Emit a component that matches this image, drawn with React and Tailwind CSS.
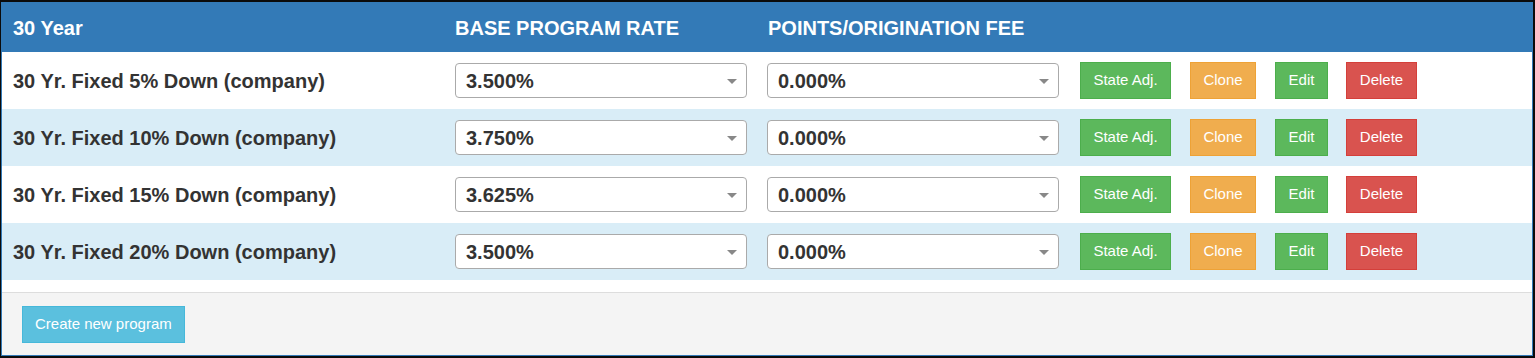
import React from "react";

const rows = [
  { name: "30 Yr. Fixed 5% Down (company)", rate: "3.500%", fee: "0.000%" },
  { name: "30 Yr. Fixed 10% Down (company)", rate: "3.750%", fee: "0.000%" },
  { name: "30 Yr. Fixed 15% Down (company)", rate: "3.625%", fee: "0.000%" },
  { name: "30 Yr. Fixed 20% Down (company)", rate: "3.500%", fee: "0.000%" },
];

function Select({ value }) {
  return (
    <div className="relative flex h-[35px] w-[292px] items-center rounded-[4px] border border-[#aaa] bg-white pl-[10px] text-[20px] font-bold text-[#333]">
      <span>{value}</span>
      <span className="absolute right-[9px] top-[15px] h-0 w-0 border-x-[5px] border-t-[5px] border-x-transparent border-t-[#888]" />
    </div>
  );
}

function Btn({ children, cls }) {
  return (
    <button
      className={
        "flex h-[37px] items-center justify-center border text-[15px] text-white " + cls
      }
    >
      {children}
    </button>
  );
}

export default function App() {
  return (
    <div
      className="w-[1535px] h-[358px] bg-[#0b0b0b] pt-[2px] pl-[1px] pr-[2px] pb-[2px]"
      style={{ fontFamily: '"Liberation Sans", Arial, sans-serif' }}
    >
      <div className="flex h-full flex-col border border-[#337ab7] bg-white">
        <div className="flex h-[49px] items-center bg-[#337ab7] pl-[11px] text-[20px] font-bold text-white">
          <div className="w-[442px]">30 Year</div>
          <div className="w-[313px]">BASE PROGRAM RATE</div>
          <div>POINTS/ORIGINATION FEE</div>
        </div>
        {rows.map((r, i) => (
          <div
            key={i}
            className={
              "flex h-[57px] items-center pl-[11px] " +
              (i % 2 === 1 ? "bg-[#d9edf7]" : "bg-white")
            }
          >
            <div className="w-[442px] text-[20px] font-bold text-[#333]">{r.name}</div>
            <Select value={r.rate} />
            <div className="w-[20px]" />
            <Select value={r.fee} />
            <div className="ml-[21px] flex items-center gap-[19px]">
              <Btn cls="w-[91px] bg-[#5cb85c] border-[#4cae4c]">State Adj.</Btn>
              <Btn cls="w-[66px] bg-[#f0ad4e] border-[#eea236]">Clone</Btn>
              <Btn cls="w-[53px] bg-[#5cb85c] border-[#4cae4c]">Edit</Btn>
              <Btn cls="w-[71px] -ml-[1px] bg-[#d9534f] border-[#d43f3a]">Delete</Btn>
            </div>
          </div>
        ))}
        <div className="h-[12px] bg-white" />
        <div className="flex-1 border-t border-[#ddd] bg-[#f4f4f4] pl-[20px] pt-[13px]">
          <Btn cls="px-[12px] bg-[#5bc0de] border-[#46b8da]">Create new program</Btn>
        </div>
      </div>
    </div>
  );
}
